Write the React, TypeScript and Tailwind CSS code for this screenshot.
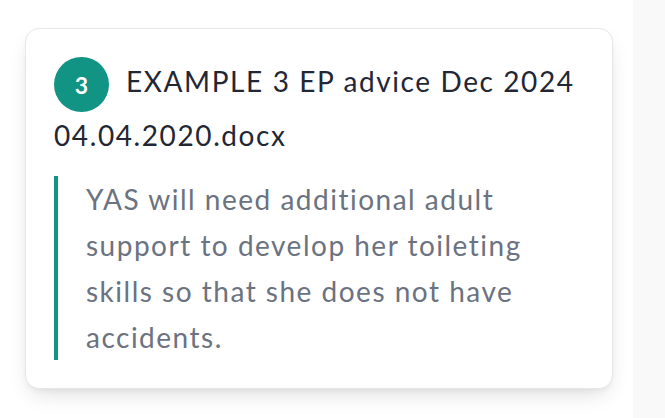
export default function App() {
  return (
    <div className="flex h-[418px] w-[665px] bg-white font-['Lato',sans-serif]">
      {/* main column */}
      <div className="w-[633px] shrink-0 overflow-hidden pl-[25px] pt-[28px]">
        <div className="w-[588px] rounded-[14px] border border-[#e6e7eb] bg-white px-[28px] pb-[28px] pt-[28px] shadow-[0_10px_22px_-6px_rgba(0,0,0,0.14),0_3px_7px_-3px_rgba(0,0,0,0.08)]">
          <h3 className="text-[28px] font-normal leading-[46px] tracking-[1.6px] text-[#232733]">
            <span className="mr-[17px] inline-flex h-[55px] w-[55px] items-center justify-center rounded-full bg-[#119484] align-middle text-[23px] font-bold tracking-normal text-white">
              3
            </span>
            EXAMPLE 3 EP advice Dec 2024 04.04.2020.docx
          </h3>
          <blockquote className="mt-[18px] border-l-4 border-[#119484] pl-[28px] text-[28px] leading-[46px] tracking-[1.5px] text-[#6b7280]">
            YAS will need additional adult support to develop her toileting skills so that she does not have accidents.
          </blockquote>
        </div>
      </div>
      {/* side strip */}
      <div className="flex-1 bg-[#f9f9f9]" />
    </div>
  );
}
